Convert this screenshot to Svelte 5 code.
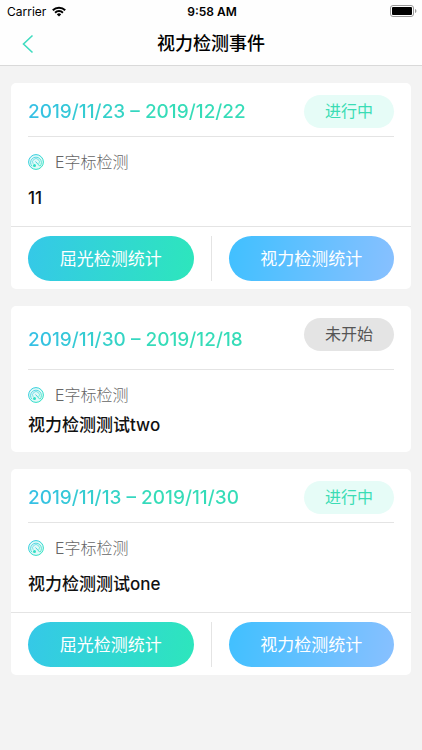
<script lang="ts">
  type VisionEvent = {
    start: string;
    end: string;
    status: 'active' | 'pending';
    type: string;
    name: string;
  };

  const statusText = {
    active: '进行中',
    pending: '未开始'
  };

  const events: VisionEvent[] = [
    { start: '2019/11/23', end: '2019/12/22', status: 'active', type: 'E字标检测', name: '11' },
    { start: '2019/11/30', end: '2019/12/18', status: 'pending', type: 'E字标检测', name: '视力检测测试two' },
    { start: '2019/11/13', end: '2019/11/30', status: 'active', type: 'E字标检测', name: '视力检测测试one' }
  ];
</script>

<div class="status-bar">
  <div class="carrier">
    <span>Carrier</span>
    <svg width="14" height="11" viewBox="0 0 14 11" aria-hidden="true">
      <g fill="none" stroke="#000" stroke-width="2">
        <path d="M0.8 4.2a8.8 8.8 0 0 1 12.4 0" />
        <path d="M3.1 6.7a5.5 5.5 0 0 1 7.8 0" />
      </g>
      <path d="M7 10.6L4.8 8.4a3.1 3.1 0 0 1 4.4 0z" />
    </svg>
  </div>
  <span class="time">9:58 AM</span>
  <div class="battery">
    <svg width="27" height="12" viewBox="0 0 27 12" aria-hidden="true">
      <rect x="0.5" y="0.5" width="23" height="11" rx="2.5" fill="#fff" stroke="#999" />
      <rect x="2" y="2" width="20" height="8" rx="1" />
      <path d="M25 4v4c0.9-0.4 1.4-1.1 1.4-2S25.9 4.4 25 4z" fill="#999" />
    </svg>
  </div>
</div>

<header class="nav">
  <button class="back" aria-label="返回">
    <svg width="12" height="20" viewBox="0 0 12 20" aria-hidden="true">
      <path d="M10.5 1.5L1.5 10l9 8.5" fill="none" stroke="#40dcc0" stroke-width="1.6" />
    </svg>
  </button>
  <h1>视力检测事件</h1>
</header>

<main>
  {#each events as event, i}
    <article class="card {event.status}">
      <div class="card-header">
        <h2>{event.start} – {event.end}</h2>
        <span class="badge">{statusText[event.status]}</span>
      </div>
      <div class="card-body">
        <div class="type">
          <svg width="16" height="16" viewBox="0 0 16 16" aria-hidden="true">
            <defs>
              <linearGradient id="ring-{i}" x1="0" y1="0" x2="1" y2="1">
                <stop offset="0" stop-color="#35c8e6" />
                <stop offset="1" stop-color="#30e6bc" />
              </linearGradient>
            </defs>
            <g fill="none" stroke="url(#ring-{i})">
              <circle cx="8" cy="8" r="7.4" fill="#e2f9f8" />
              <path d="M4 12.2a5.4 5.4 0 1 1 8 0" stroke-width="0.8" />
              <path d="M5.2 9.9a3.4 3.4 0 1 1 5.6 0" stroke-width="0.6" />
              <path d="M7.5 7.5l4.2 4.6" stroke-width="0.9" />
            </g>
            <circle cx="6.5" cy="11.5" r="1.5" fill="#30dfc4" />
          </svg>
          <span>{event.type}</span>
        </div>
        <p class="name">{event.name}</p>
      </div>
      {#if event.status === 'active'}
        <div class="card-footer">
          <button class="refraction">屈光检测统计</button>
          <span class="divider"></span>
          <button class="vision">视力检测统计</button>
        </div>
      {/if}
    </article>
  {/each}
</main>

<style>
  :global(body) {
    background: #f3f3f3;
    font-family: Inter, "Noto Sans CJK SC", sans-serif;
    color: #111;
  }

  .status-bar {
    display: grid;
    grid-template-columns: 1fr auto 1fr;
    align-items: center;
    height: 22px;
    padding: 0 5px 0 7px;
    background: #fefefe;
    font-size: 12px;
    color: #000;
  }

  .carrier {
    display: flex;
    align-items: center;
    gap: 6px;
  }

  .time {
    font-weight: 600;
  }

  .battery {
    display: flex;
    justify-content: flex-end;
  }

  .nav {
    display: grid;
    grid-template-columns: 56px 1fr 56px;
    align-items: center;
    height: 43px;
    background: #fefefe;
    border-bottom: 1px solid #d9d9d9;
  }

  button {
    border: none;
    padding: 0;
    font-family: inherit;
    cursor: pointer;
  }

  .back {
    display: flex;
    align-items: center;
    justify-content: center;
    height: 43px;
    background: none;
  }

  h1 {
    margin: 0;
    font-size: 18px;
    font-weight: 500;
    line-height: 24px;
    text-align: center;
    color: #000;
  }

  main {
    display: flex;
    flex-direction: column;
    gap: 17px;
    padding: 17px 11px;
  }

  .card {
    background: #fff;
    border-radius: 5px;
  }

  .card-header {
    display: flex;
    justify-content: space-between;
    align-items: center;
    height: 54px;
    margin: 0 17px;
    padding-top: 4px;
    box-sizing: border-box;
    border-bottom: 1px solid #e4e4e4;
  }

  .pending .card-header {
    height: 64px;
  }

  .pending .badge {
    align-self: flex-start;
    margin-top: 8px;
  }

  h2 {
    margin: 0;
    font-size: 19px;
    font-weight: 500;
    line-height: 24px;
    background: linear-gradient(90deg, #35bfe6, #35dcb8 60%);
    background-clip: text;
    -webkit-background-clip: text;
    color: transparent;
  }

  .badge {
    width: 90px;
    border-radius: 17px;
    background: #e6fcf7;
    font-size: 16px;
    line-height: 33px;
    text-align: center;
    color: #3bdcb4;
  }

  .pending .badge {
    background: #e4e4e4;
    color: #555;
  }

  .card-body {
    display: flex;
    flex-direction: column;
    gap: 12px;
    padding: 13px 17px 16px;
  }

  .pending .card-body {
    gap: 6px;
    padding-bottom: 15px;
  }

  .type {
    display: flex;
    align-items: center;
    gap: 11px;
    font-size: 16px;
    font-weight: 300;
    line-height: 24px;
    color: #666;
  }

  .name {
    margin: 0;
    font-size: 17px;
    font-weight: 500;
    line-height: 24px;
  }

  .card-footer {
    display: flex;
    gap: 17px;
    padding: 9px 17px 8px;
    border-top: 1px solid #e4e4e4;
  }

  .card-footer button {
    flex: 1;
    height: 45px;
    padding-bottom: 2px;
    border-radius: 23px;
    font-size: 17px;
    color: #fff;
  }

  .refraction {
    background: linear-gradient(100deg, #35c8e8, #2de6bc);
  }

  .vision {
    background: linear-gradient(100deg, #40c0ff, #88c0ff);
  }

  .divider {
    width: 1px;
    background: #e4e4e4;
  }
</style>
